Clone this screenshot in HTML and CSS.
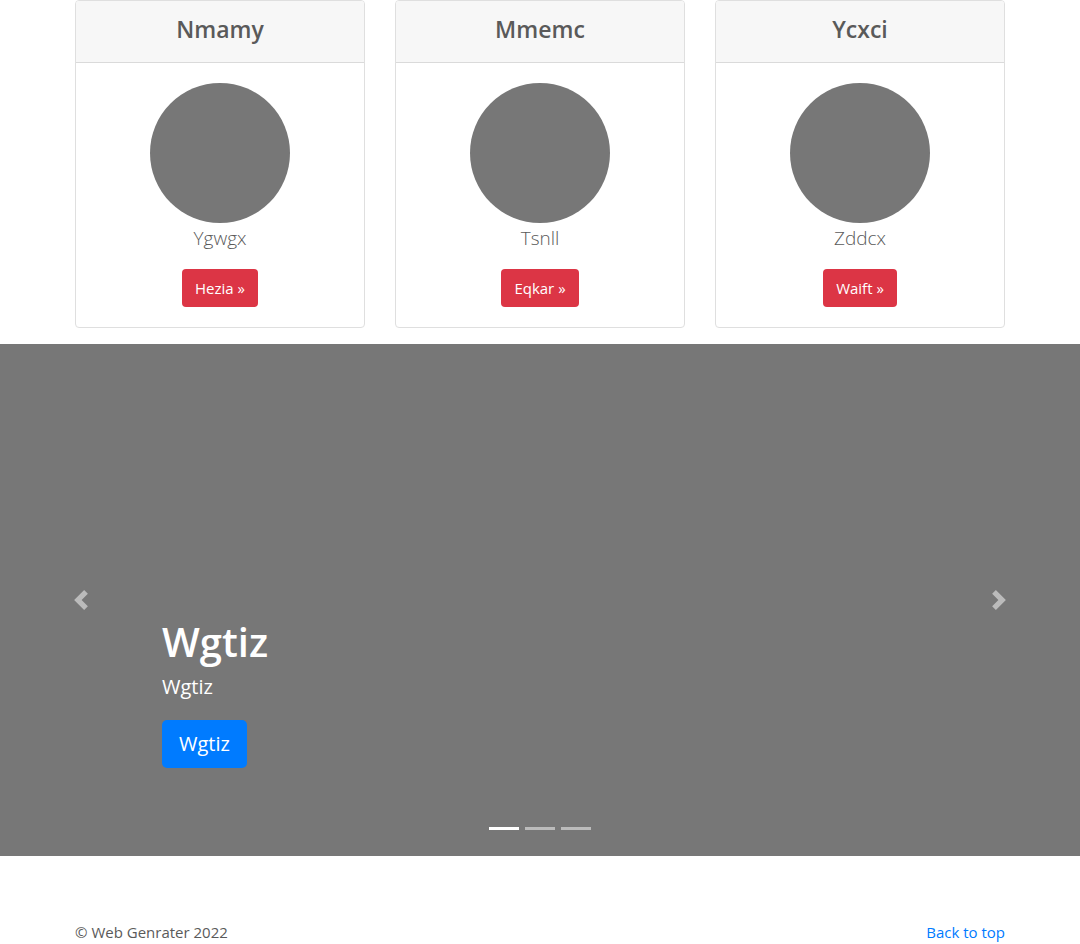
FILE: index.html
```html
<!DOCTYPE html>
<html lang="en">
<head>
<meta charset="utf-8">
<meta name="viewport" content="width=device-width, initial-scale=1">
<title>Web Genrater</title>
<link rel="stylesheet" href="styles.css">
</head>
<body>
<main>
  <section class="container cards">
    <article class="card">
      <header class="card-header"><h4 class="card-title">Nmamy</h4></header>
      <div class="card-body">
        <div class="avatar"></div>
        <p class="card-text">Ygwgx</p>
        <a class="btn btn-danger" href="#">Hezia »</a>
      </div>
    </article>
    <article class="card">
      <header class="card-header"><h4 class="card-title">Mmemc</h4></header>
      <div class="card-body">
        <div class="avatar"></div>
        <p class="card-text">Tsnll</p>
        <a class="btn btn-danger" href="#">Eqkar »</a>
      </div>
    </article>
    <article class="card">
      <header class="card-header"><h4 class="card-title">Ycxci</h4></header>
      <div class="card-body">
        <div class="avatar"></div>
        <p class="card-text">Zddcx</p>
        <a class="btn btn-danger" href="#">Waift »</a>
      </div>
    </article>
  </section>

  <section class="carousel">
    <button class="control" type="button" aria-label="Previous">
      <svg class="chevron" viewBox="0 0 8 8" aria-hidden="true"><path d="M5.25 0l-4 4 4 4 1.5-1.5-2.5-2.5 2.5-2.5-1.5-1.5z"/></svg>
    </button>
    <div class="slide">
      <div class="caption">
        <h1 class="caption-title">Wgtiz</h1>
        <p class="caption-text">Wgtiz</p>
        <a class="btn btn-primary" href="#">Wgtiz</a>
      </div>
      <div class="indicators">
        <button class="indicator active" type="button" aria-label="Slide 1"></button>
        <button class="indicator" type="button" aria-label="Slide 2"></button>
        <button class="indicator" type="button" aria-label="Slide 3"></button>
      </div>
    </div>
    <button class="control" type="button" aria-label="Next">
      <svg class="chevron" viewBox="0 0 8 8" aria-hidden="true"><path d="M2.75 0l-1.5 1.5 2.5 2.5-2.5 2.5 1.5 1.5 4-4-4-4z"/></svg>
    </button>
  </section>
</main>
<footer class="container footer">
  <span>© Web Genrater 2022</span>
  <a class="link" href="#">Back to top</a>
</footer>
</body>
</html>
```
FILE: styles.css
```css
* {
  box-sizing: border-box;
}

body {
  margin: 0;
  background: #fff;
  color: #5a5a5a;
  font-family: "Open Sans", "Noto Sans", sans-serif;
  font-size: 15px;
  line-height: 24px;
}

h1, h4, p {
  margin: 0;
}

.container {
  max-width: 960px;
  margin: 0 auto;
  padding: 0 15px;
}

.cards {
  display: grid;
  grid-template-columns: repeat(3, 1fr);
  gap: 30px;
  padding-bottom: 16px;
}

.card {
  border: 1px solid #dfdfdf;
  border-radius: 4px;
  overflow: hidden;
  text-align: center;
}

.card-header {
  padding: 12px 20px 17px;
  background: #f7f7f7;
  border-bottom: 1px solid #dadada;
}

.card-title {
  font-size: 23px;
  font-weight: 600;
  line-height: 32px;
}

.card-body {
  display: flex;
  flex-direction: column;
  align-items: center;
  padding: 20px;
}

.avatar {
  width: 140px;
  height: 140px;
  border-radius: 50%;
  background: #777;
}

.card-text {
  margin-bottom: 16px;
  font-size: 19px;
  font-weight: 300;
  line-height: 30px;
}

.btn {
  display: inline-block;
  color: #fff;
  text-decoration: none;
}

.btn-danger {
  padding: 7px 13px;
  border-radius: 4px;
  background: #dc3545;
}

.btn-primary {
  padding: 9px 17px;
  border-radius: 5px;
  background: #007bff;
  font-size: 20px;
  line-height: 30px;
}

.carousel {
  display: grid;
  grid-template-columns: 15% 1fr 15%;
  min-height: 512px;
  margin-bottom: 64px;
  background: #777;
  color: #fff;
}

.control {
  display: flex;
  align-items: center;
  justify-content: center;
  padding: 0;
  border: 0;
  background: none;
  opacity: 0.5;
}

.chevron {
  width: 20px;
  height: 20px;
  fill: #fff;
}

.slide {
  display: flex;
  flex-direction: column;
  justify-content: flex-end;
  gap: 59px;
  padding-bottom: 26px;
}

.caption-title {
  margin-bottom: 8px;
  font-size: 40px;
  font-weight: 600;
  line-height: 48px;
}

.caption-text {
  margin-bottom: 20px;
  font-size: 20px;
  line-height: 26px;
}

.indicators {
  display: flex;
  justify-content: center;
  gap: 6px;
}

.indicator {
  width: 30px;
  height: 3px;
  padding: 0;
  border: 0;
  background: #fff;
  opacity: 0.5;
}

.indicator.active {
  opacity: 1;
}

.footer {
  display: flex;
  justify-content: space-between;
}

.link {
  color: #007bff;
  text-decoration: none;
}
```
